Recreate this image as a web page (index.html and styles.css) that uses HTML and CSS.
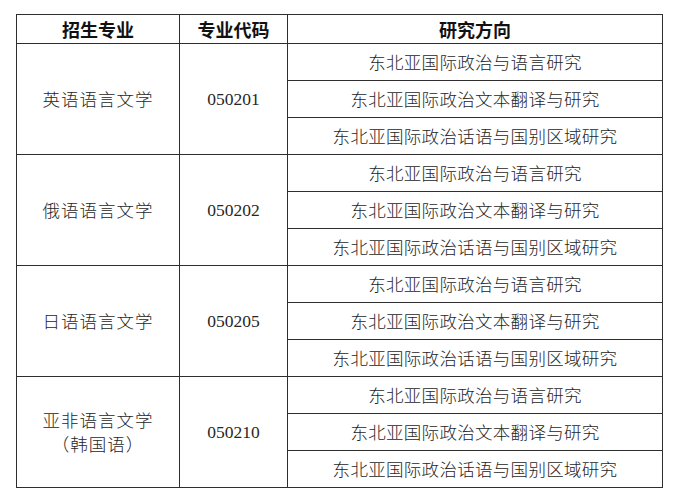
FILE: index.html
```html
<!DOCTYPE html>
<html lang="zh-CN">
<head>
<meta charset="utf-8">
<link rel="stylesheet" href="styles.css">
</head>
<body>
<table class="grid">
  <colgroup>
    <col class="c1"><col class="c2"><col class="c3">
  </colgroup>
  <thead>
    <tr class="head"><th>招生专业</th><th>专业代码</th><th>研究方向</th></tr>
  </thead>
  <tbody>
    <tr><td rowspan="3" class="major">英语语言文学</td><td rowspan="3" class="code">050201</td><td>东北亚国际政治与语言研究</td></tr>
    <tr><td>东北亚国际政治文本翻译与研究</td></tr>
    <tr><td>东北亚国际政治话语与国别区域研究</td></tr>
    <tr><td rowspan="3" class="major">俄语语言文学</td><td rowspan="3" class="code">050202</td><td>东北亚国际政治与语言研究</td></tr>
    <tr><td>东北亚国际政治文本翻译与研究</td></tr>
    <tr><td>东北亚国际政治话语与国别区域研究</td></tr>
    <tr><td rowspan="3" class="major">日语语言文学</td><td rowspan="3" class="code">050205</td><td>东北亚国际政治与语言研究</td></tr>
    <tr><td>东北亚国际政治文本翻译与研究</td></tr>
    <tr><td>东北亚国际政治话语与国别区域研究</td></tr>
    <tr><td rowspan="3" class="major">亚非语言文学<br>（韩国语）</td><td rowspan="3" class="code">050210</td><td>东北亚国际政治与语言研究</td></tr>
    <tr><td>东北亚国际政治文本翻译与研究</td></tr>
    <tr><td>东北亚国际政治话语与国别区域研究</td></tr>
  </tbody>
</table>
</body>
</html>
```
FILE: styles.css
```css
html, body {
  margin: 0;
  background: #ffffff;
}
body {
  padding: 14px 0 0 16px;
  font-family: "Noto Sans CJK SC", "Noto Sans", sans-serif;
  color: #262626;
}
.grid {
  border-collapse: collapse;
  table-layout: fixed;
  width: 646px;
}
.c1 { width: 163px; }
.c2 { width: 108px; }
.c3 { width: 375px; }
.grid th, .grid td {
  border: 1px solid #2e2e2e;
  padding: 0;
  text-align: center;
  vertical-align: middle;
}
.grid th {
  font-weight: 700;
  font-size: 18px;
  color: #111;
  height: 28px;
  line-height: 28px;
}
.grid td {
  font-size: 17.5px;
  font-weight: 300;
  height: 36px;
  line-height: 24px;
  letter-spacing: 0.3px;
}
.grid td.code {
  font-family: "Liberation Serif", "DejaVu Serif", serif;
  font-weight: 400;
  font-size: 17.5px;
  letter-spacing: 0;
}
.grid td.major {
  letter-spacing: 1px;
}
```
